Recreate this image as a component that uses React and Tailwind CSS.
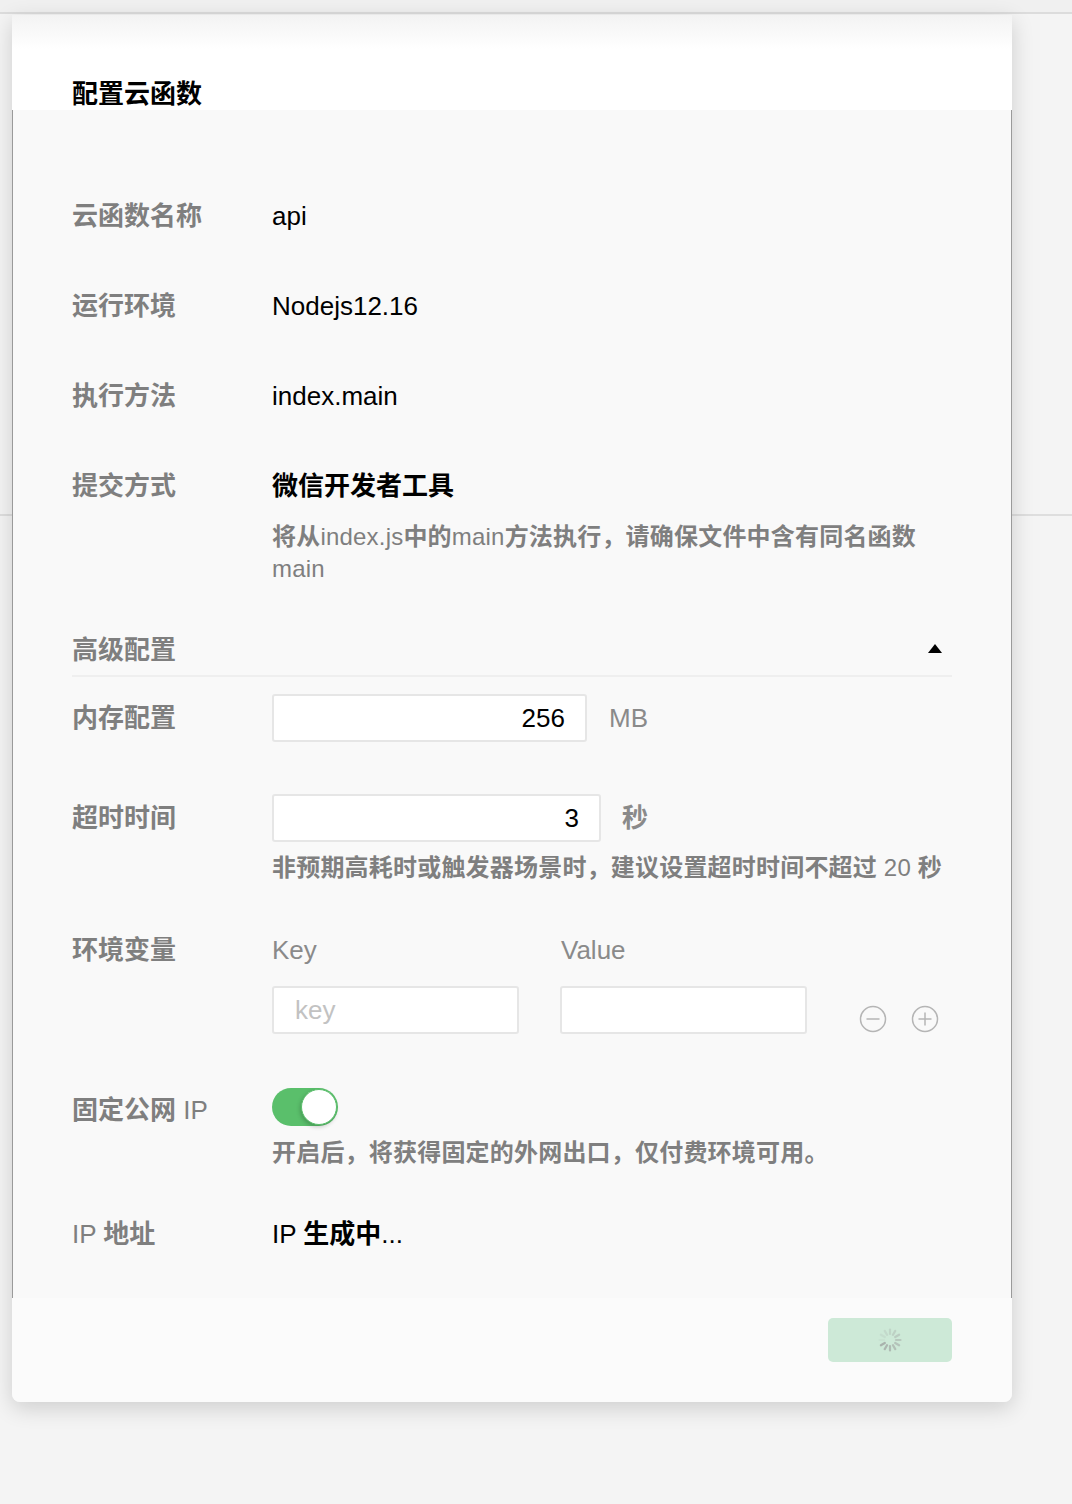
import React from 'react';

const Label = ({ children, className = '' }) => (
  <div className={`w-[200px] shrink-0 text-[26px] leading-[36px] font-bold text-[#7f7f7f] ${className}`}>
    {children}
  </div>
);

const Hint = ({ children, className = '' }) => (
  <div className={`text-[24px] leading-[32px] font-bold text-[#7f7f7f] tracking-[0.2px] ${className}`}>{children}</div>
);

const CircleIcon = ({ plus }) => (
  <svg width="28" height="28" viewBox="0 0 28 28" fill="none" stroke="#b5b5b5" strokeWidth="1.5">
    <circle cx="14" cy="14" r="12.5" />
    <line x1="7.5" y1="14" x2="20.5" y2="14" />
    {plus && <line x1="14" y1="7.5" x2="14" y2="20.5" />}
  </svg>
);

const Spinner = () => (
  <svg width="26" height="26" viewBox="0 0 26 26">
    {Array.from({ length: 12 }).map((_, i) => {
      const a = (i * 30 * Math.PI) / 180;
      const x1 = 13 + Math.sin(a) * 6;
      const y1 = 13 - Math.cos(a) * 6;
      const x2 = 13 + Math.sin(a) * 10.5;
      const y2 = 13 - Math.cos(a) * 10.5;
      return (
        <line
          key={i}
          x1={x1}
          y1={y1}
          x2={x2}
          y2={y2}
          stroke="#9a9a9a"
          strokeWidth="2.2"
          strokeLinecap="round"
          opacity={0.08 + ((i + 3) % 12) / 18}
        />
      );
    })}
  </svg>
);

export default function App() {
  return (
    <div className="relative h-[1504px] overflow-hidden bg-[#f4f4f4] font-[family-name:'Liberation_Sans','Noto_Sans_CJK_SC',sans-serif]">
      {/* page behind the dialog */}
      <div className="h-[14px] bg-[#f0f0f0] border-b-2 border-[#dcdcdc]" />
      <div className="absolute left-0 right-0 top-[514px] h-[2px] bg-[#dedede]" />

      {/* dialog */}
      <div className="absolute left-[12px] top-[15px] w-[1000px] rounded-b-lg shadow-[0_6px_22px_rgba(0,0,0,0.16)]">
        <div className="h-[95px] px-[60px] pt-[61px] bg-[linear-gradient(to_bottom,#f3f3f3,#ffffff_34px)]">
          <h1 className="text-[26px] leading-[36px] font-bold text-black">配置云函数</h1>
        </div>

        <div className="bg-[#f9f9f9] border-x border-[#9a9a9a] px-[59px] pt-[88px] pb-[46px]">
          <div className="flex">
            <Label>云函数名称</Label>
            <div className="text-[26px] leading-[36px] text-black">api</div>
          </div>
          <div className="flex mt-[54px]">
            <Label>运行环境</Label>
            <div className="text-[26px] leading-[36px] text-black">Nodejs12.16</div>
          </div>
          <div className="flex mt-[54px]">
            <Label>执行方法</Label>
            <div className="text-[26px] leading-[36px] text-black">index.main</div>
          </div>
          <div className="flex mt-[54px]">
            <Label>提交方式</Label>
            <div className="flex-1">
              <div className="text-[26px] leading-[36px] font-bold text-black">微信开发者工具</div>
              <Hint className="mt-[17px]">
                将从<span className="font-normal">index.js</span>中的<span className="font-normal">main</span>方法执行，请确保文件中含有同名函数<span className="font-normal">main</span>
              </Hint>
            </div>
          </div>

          <div className="mt-[47px] flex items-center justify-between pb-[7px] border-b-2 border-[#efefef]">
            <Label>高级配置</Label>
            <svg width="14" height="9" viewBox="0 0 14 9" className="mr-[10px] -mt-[4px]">
              <polygon points="7,0 14,9 0,9" fill="#000" />
            </svg>
          </div>

          <div className="flex items-center mt-[17px]">
            <Label>内存配置</Label>
            <input
              readOnly
              defaultValue="256"
              className="w-[315px] h-[48px] bg-white border-2 border-[#e6e6e6] rounded-[3px] text-right pr-[20px] text-[26px] text-black outline-none"
            />
            <span className="ml-[22px] text-[26px] text-[#8a8a8a]">MB</span>
          </div>

          <div className="flex mt-[52px]">
            <Label className="mt-[6px]">超时时间</Label>
            <div className="flex-1">
              <div className="flex items-center">
                <input
                  readOnly
                  defaultValue="3"
                  className="w-[329px] h-[48px] bg-white border-2 border-[#e6e6e6] rounded-[3px] text-right pr-[20px] text-[26px] text-black outline-none"
                />
                <span className="ml-[21px] text-[26px] font-bold text-[#8a8a8a]">秒</span>
              </div>
              <Hint className="mt-[10px]">
                非预期高耗时或触发器场景时，建议设置超时时间不超过<span className="font-normal"> 20 </span>秒
              </Hint>
            </div>
          </div>

          <div className="flex mt-[48px]">
            <Label>环境变量</Label>
            <div className="flex-1">
              <div className="flex text-[26px] leading-[36px] text-[#8a8a8a]">
                <div className="w-[289px]">Key</div>
                <div>Value</div>
              </div>
              <div className="flex items-center mt-[18px]">
                <input
                  readOnly
                  placeholder="key"
                  className="w-[247px] h-[48px] bg-white border-2 border-[#e6e6e6] rounded-[3px] pl-[21px] text-[26px] text-black placeholder:text-[#c2c2c2] outline-none"
                />
                <input
                  readOnly
                  className="ml-[41px] w-[247px] h-[48px] bg-white border-2 border-[#e6e6e6] rounded-[3px] text-[26px] outline-none"
                />
                <div className="ml-[52px] mt-[18px] flex gap-[24px]">
                  <CircleIcon />
                  <CircleIcon plus />
                </div>
              </div>
            </div>
          </div>

          <div className="flex mt-[54px]">
            <Label className="mt-[4px]">
              固定公网<span className="font-normal"> IP</span>
            </Label>
            <div className="flex-1">
              <div className="relative w-[66px] h-[38px] rounded-full bg-[#5abf6b]">
                <div className="absolute right-[1px] top-[1px] w-[36px] h-[36px] rounded-full bg-white border border-[#5abf6b] shadow-[-1px_2px_4px_rgba(0,0,0,0.2)]" />
              </div>
              <Hint className="mt-[11px]">开启后，将获得固定的外网出口，仅付费环境可用。</Hint>
            </div>
          </div>

          <div className="flex mt-[47px]">
            <Label>
              <span className="font-normal">IP </span>地址
            </Label>
            <div className="text-[26px] leading-[36px] text-black">
              IP <span className="font-bold">生成中</span>...
            </div>
          </div>
        </div>

        <div className="h-[104px] bg-[#fbfbfb] rounded-b-lg flex justify-end pt-[20px] pr-[60px]">
          <div className="w-[124px] h-[44px] rounded-[5px] bg-[#cde9d7] flex items-center justify-center">
            <Spinner />
          </div>
        </div>
      </div>
    </div>
  );
}
